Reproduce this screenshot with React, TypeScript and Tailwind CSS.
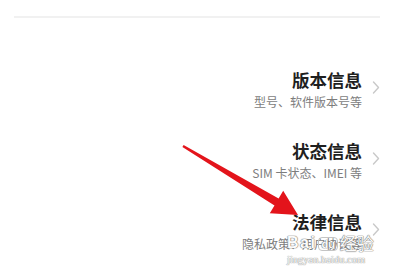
import React from 'react';

interface InfoItem {
  title: string;
  desc: string;
}

const items: InfoItem[] = [
  { title: '版本信息', desc: '型号、软件版本号等' },
  { title: '状态信息', desc: 'SIM 卡状态、IMEI 等' },
  { title: '法律信息', desc: '隐私政策、用户协议等' },
];

const Chevron: React.FC = () => (
  <svg width="8" height="13" viewBox="0 0 8 13" className="mt-[11px] ml-[10px] shrink-0">
    <polyline points="1.5,1 6.5,6.5 1.5,12" fill="none" stroke="#c9c9c9" strokeWidth="1.4" strokeLinecap="round" strokeLinejoin="round" />
  </svg>
);

const App: React.FC = () => {
  return (
    <div className="relative w-[403px] h-[275px] overflow-hidden bg-white pt-[16px] font-['Noto_Sans_CJK_SC','Noto_Sans',sans-serif]">
      {/* top divider */}
      <div className="mx-[14px] w-[366px] h-[2px] bg-[#f1f1f1]" />

      {/* settings rows */}
      <div className="mt-[52px] flex flex-col pr-[23px]">
        {items.map(item => (
          <div key={item.title} className="h-[71px] flex justify-end items-start">
            <div className="flex flex-col items-end">
              <span className="text-[17.5px] leading-[20px] font-bold text-[#1f1f1f]">{item.title}</span>
              <span className="mt-[4px] text-[12px] leading-[16px] text-[#7d7d7d]">{item.desc}</span>
            </div>
            <Chevron />
          </div>
        ))}
      </div>

      {/* red arrow annotation */}
      <svg className="absolute inset-0 pointer-events-none" width="403" height="275" viewBox="0 0 403 275">
        <polygon
          points="183.6,144.9 278.6,198.6 283.2,190.8 298,215 269.8,213.2 274.5,205.4 182.4,147.1"
          fill="#e3141b"
        />
      </svg>

      {/* baidu watermark */}
      <div className="absolute left-[287px] top-[234px] flex flex-col items-start pointer-events-none">
        <div className="flex items-end gap-[2px] text-[#fbfbfb] [text-shadow:0_0_1px_#7a7a7a,0_0_1px_#7a7a7a,0_0_1px_#7a7a7a] font-['Liberation_Sans',sans-serif]">
          <span className="text-[16px] leading-[16px] font-bold tracking-[1.5px]">Bai</span>
          <span className="text-[11px] leading-[12px] font-bold px-[2px] rounded-[4px] border border-[#c4c4c4]">du</span>
          <span className="text-[17px] leading-[17px] font-['Noto_Sans_CJK_SC',sans-serif]">经验</span>
        </div>
        <span className="mt-[3px] text-[10.5px] leading-[11px] text-[#fbfbfb] [text-shadow:0_0_1px_#8a8a8a,0_0_1px_#8a8a8a] font-['Liberation_Serif',serif]">jingyan.baidu.com</span>
      </div>
    </div>
  );
};

export default App;
